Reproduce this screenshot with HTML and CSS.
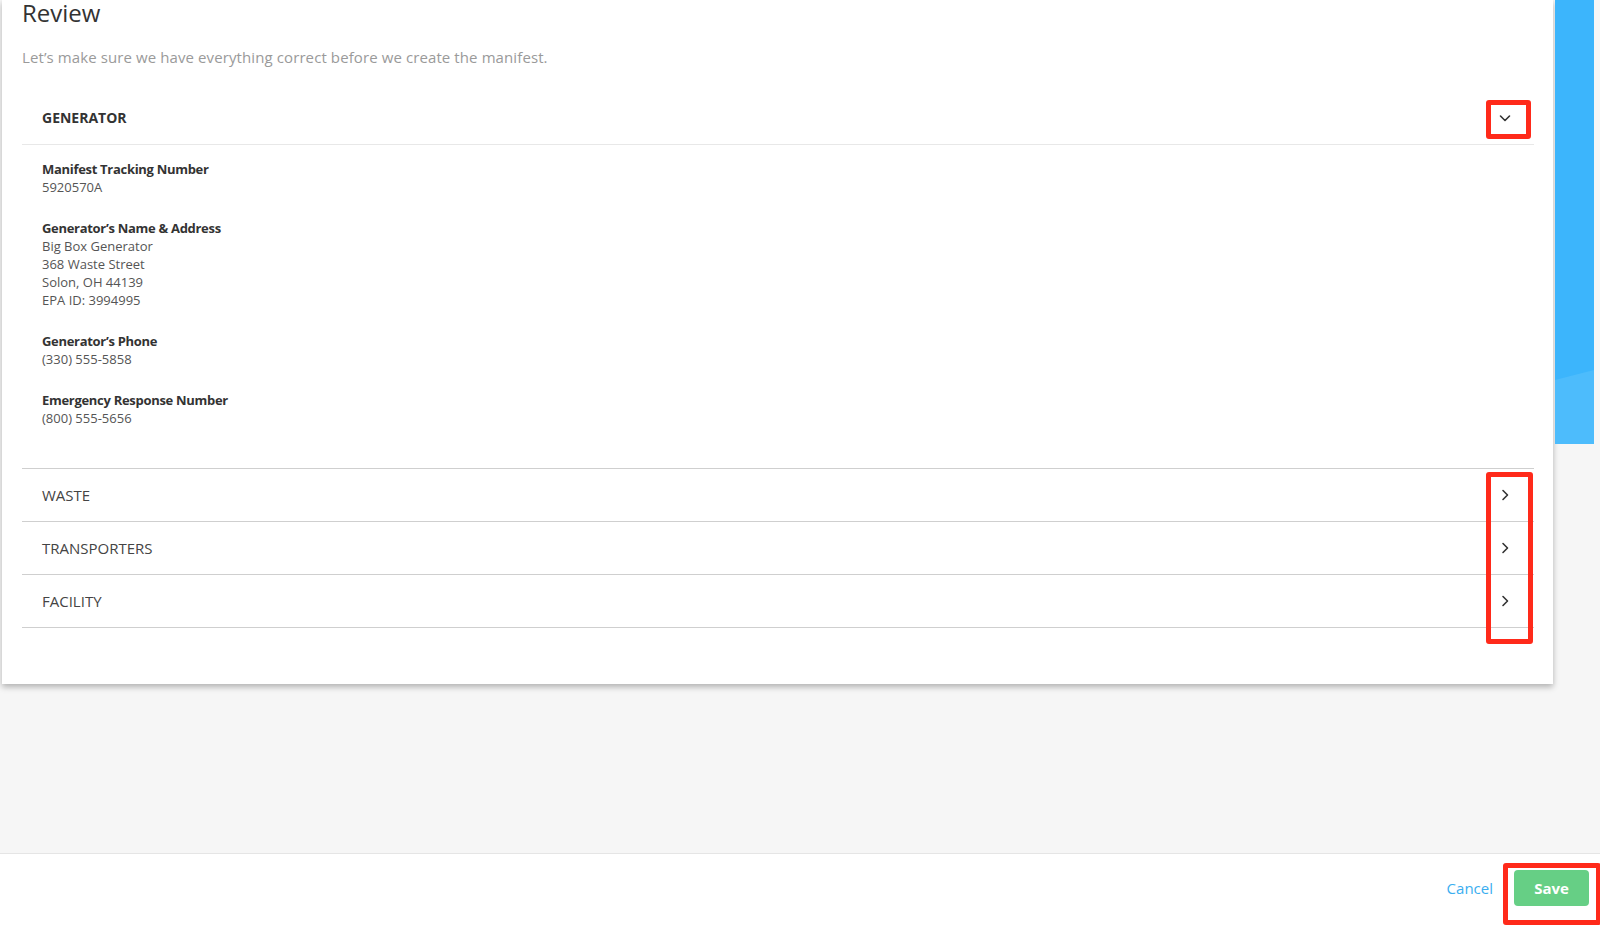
FILE: index.html
```html
<!DOCTYPE html>
<html lang="en">
<head>
<meta charset="utf-8">
<title>Review</title>
<link rel="stylesheet" href="styles.css">
</head>
<body>
<div class="page">
  <div class="main">
    <section class="card">
      <h1 class="title">Review</h1>
      <p class="subtitle">Let’s make sure we have everything correct before we create the manifest.</p>

      <div class="section-head">
        <span class="section-name">GENERATOR</span>
        <svg class="chev" width="14" height="14" viewBox="0 0 14 14"><path d="M2.5 5 L7 9.5 L11.5 5" fill="none" stroke="#333" stroke-width="1.6" stroke-linecap="round" stroke-linejoin="round"/></svg>
      </div>

      <div class="details">
        <div class="field">
          <div class="label">Manifest Tracking Number</div>
          <div class="value">5920570A</div>
        </div>
        <div class="field">
          <div class="label">Generator’s Name &amp; Address</div>
          <div class="value">Big Box Generator</div>
          <div class="value">368 Waste Street</div>
          <div class="value">Solon, OH 44139</div>
          <div class="value">EPA ID: 3994995</div>
        </div>
        <div class="field">
          <div class="label">Generator’s Phone</div>
          <div class="value">(330) 555-5858</div>
        </div>
        <div class="field">
          <div class="label">Emergency Response Number</div>
          <div class="value">(800) 555-5656</div>
        </div>
      </div>

      <div class="rows">
        <div class="row"><span>WASTE</span><svg class="chev" width="14" height="14" viewBox="0 0 14 14"><path d="M5 2.5 L9.5 7 L5 11.5" fill="none" stroke="#333" stroke-width="1.6" stroke-linecap="round" stroke-linejoin="round"/></svg></div>
        <div class="row"><span>TRANSPORTERS</span><svg class="chev" width="14" height="14" viewBox="0 0 14 14"><path d="M5 2.5 L9.5 7 L5 11.5" fill="none" stroke="#333" stroke-width="1.6" stroke-linecap="round" stroke-linejoin="round"/></svg></div>
        <div class="row"><span>FACILITY</span><svg class="chev" width="14" height="14" viewBox="0 0 14 14"><path d="M5 2.5 L9.5 7 L5 11.5" fill="none" stroke="#333" stroke-width="1.6" stroke-linecap="round" stroke-linejoin="round"/></svg></div>
      </div>
    </section>
    <div class="side"></div>
  </div>
  <footer class="footer">
    <a class="cancel" href="#">Cancel</a>
    <button class="save" type="button">Save</button>
  </footer>
</div>
<div class="mark mark-head"></div>
<div class="mark mark-rows"></div>
<div class="mark mark-save"></div>
</body>
</html>
```
FILE: styles.css
```css
* { box-sizing: border-box; }
html, body { margin: 0; padding: 0; }
body {
  background: #f6f6f6;
  font-family: "Open Sans", "Noto Sans", sans-serif;
  color: #333;
  width: 1600px;
  height: 926px;
  overflow: hidden;
  position: relative;
}
.page { display: flex; flex-direction: column; height: 926px; }
.main {
  height: 853px;
  display: flex;
  align-items: flex-start;
  padding-left: 2px;
}
.card {
  width: 1551px;
  height: 684px;
  background: #fff;
  box-shadow: 0 3px 6px rgba(0,0,0,0.28);
  padding: 0 19px 0 20px;
}
.title {
  margin: 0;
  padding-top: 1px;
  font-size: 24px;
  font-weight: 400;
  line-height: 24px;
  color: #333;
}
.subtitle {
  margin: 22px 0 0;
  font-size: 15px;
  line-height: 20px;
  letter-spacing: 0.1px;
  color: #9a9a9a;
}
.section-head {
  margin-top: 24px;
  height: 54px;
  display: flex;
  align-items: center;
  justify-content: space-between;
  padding: 0 22px 0 20px;
  border-bottom: 1px solid #e8e8e8;
}
.section-name { font-size: 14px; font-weight: 700; color: #333; }
.chev { display: block; }
.details {
  padding: 15px 20px 41px;
  display: flex;
  flex-direction: column;
  gap: 23px;
}
.label { font-size: 13px; font-weight: 700; line-height: 18px; letter-spacing: -0.3px; color: #333; }
.value { font-size: 13px; line-height: 18px; color: #555; }
.rows { border-top: 1px solid #cfcfcf; }
.row {
  height: 53px;
  display: flex;
  align-items: center;
  justify-content: space-between;
  padding: 0 22px 0 20px;
  border-bottom: 1px solid #cfcfcf;
  font-size: 15px;
  color: #444;
}
.side {
  width: 39px;
  height: 444px;
  margin-left: 2px;
  background: #3cb5fc;
  position: relative;
  overflow: hidden;
}
.side::after {
  content: "";
  position: absolute;
  left: 0; right: 0; bottom: 0;
  height: 74px;
  background: #4dbcfc;
  clip-path: polygon(0 10px, 100% 0, 100% 100%, 0 100%);
}
.footer {
  height: 73px;
  background: #fff;
  border-top: 1px solid #e5e5e5;
  display: flex;
  align-items: center;
  justify-content: flex-end;
  gap: 21px;
  padding: 0 11px 4px 0;
}
.cancel {
  color: #3aaef0;
  text-decoration: none;
  font-size: 15px;
}
.save {
  width: 75px;
  height: 36px;
  border: 0;
  border-radius: 4px;
  background: #66cf85;
  color: #fff;
  font-family: "Open Sans", "Noto Sans", sans-serif;
  font-size: 15px;
  font-weight: 700;
}
.mark {
  position: absolute;
  border: 5px solid #ff2a1a;
  border-radius: 3px;
}
.mark-head { left: 1486px; top: 100px; width: 45px; height: 39px; }
.mark-rows { left: 1486px; top: 472px; width: 47px; height: 172px; }
.mark-save { left: 1503px; top: 863px; width: 98px; height: 62px; }
```
